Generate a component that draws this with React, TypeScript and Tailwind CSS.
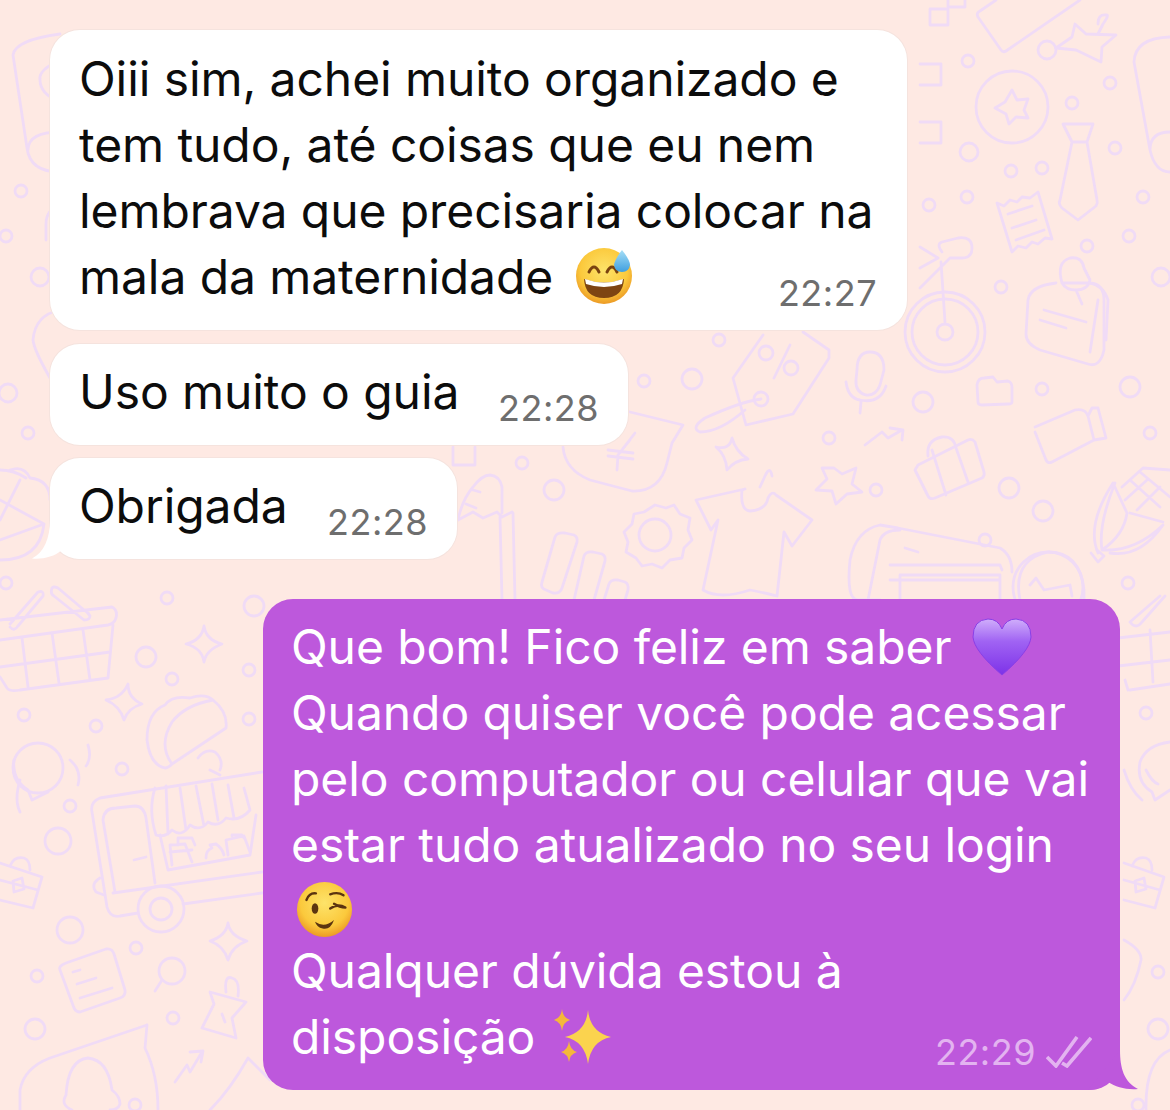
import React from "react";

// small dots scattered on the wallpaper: [cx, cy, r]
const dots: number[][] = [
  [1047, 50, 9], [968, 61, 6], [1110, 83, 6], [1072, 103, 6], [969, 152, 9], [1011, 171, 6], [1042, 168, 6],
  [1115, 148, 6], [967, 197, 6], [929, 205, 6], [1143, 197, 6], [1129, 236, 6], [1087, 246, 6], [1001, 287, 6],
  [1161, 277, 9], [122, 769, 6], [70, 806, 6], [58, 841, 13], [70, 930, 13], [136, 948, 6], [37, 976, 6],
  [173, 1018, 6], [35, 1029, 10], [167, 598, 6], [254, 606, 10], [146, 657, 10], [249, 670, 6], [172, 679, 6],
  [24, 715, 6], [96, 726, 6], [249, 719, 6], [6, 583, 6], [719, 340, 6], [644, 381, 6], [692, 379, 10],
  [829, 438, 6], [876, 490, 6], [923, 402, 10], [1042, 389, 6], [1130, 387, 10], [1150, 433, 6], [1009, 488, 10],
  [1043, 511, 10], [985, 540, 6], [1128, 583, 6], [21, 191, 6], [6, 236, 6], [40, 277, 9], [8, 393, 9], [28, 433, 6],
  [554, 490, 10], [522, 463, 6], [1146, 713, 6], [1158, 972, 6], [1158, 1029, 10], [1138, 1105, 6], [135, 1105, 6],
  [1012, 107, 36], [945, 332, 8], [655, 535, 16], [172, 971, 13], [161, 909, 11], [161, 909, 23], [945, 332, 33], [945, 332, 40],
  [1048, 587, 35], [38, 768, 25],
];

const doodles: string[] = [
  // phone and squares, top right
  "M1080 0L1006 51Q1003 53 1001 50L978 17Q976 13 980 11L996 0",
  "M930 9H948V25H930ZM948 0V7H965V0M920 64H941V85H920M920 122H941V143H920",
  // nipple bottle
  "M1075 24L1086 34L1116 35L1102 47L1101 62L1076 50L1056 48L1072 37Z M1098 34L1103 24Q1110 14 1106 15Q1098 14 1098 24",
  // big lens, right edge
  "M1170 37Q1135 38 1134 62L1150 150Q1155 172 1170 172M1170 132Q1150 132 1150 150",
  // tie
  "M1063 124H1093L1087 142H1072ZM1072 142L1060 200Q1058 204 1062 208L1078 220L1096 206Q1098 203 1097 200L1087 142",
  // receipt
  "M997 203L1004 206L1010 200L1017 202L1022 197L1030 198L1038 192L1052 239L1045 238L1038 244L1032 242L1026 248L1018 246L1012 252ZM1008 214L1032 206M1012 228L1036 220M1016 240L1044 230",
  // bike
  "M920 247L938 258L920 268M920 288L950 258L962 258Q972 258 972 248Q972 236 958 238L942 242Q936 244 942 252M945 322L941 262",
  // pinned note
  "M1056 283Q1030 286 1028 300L1026 334Q1026 344 1040 350L1088 364Q1100 368 1104 350L1104 300Q1104 284 1090 283L1062 283M1044 310L1086 322M1040 320L1066 328M1062 283Q1056 262 1070 258Q1082 256 1084 268L1090 280Q1088 290 1076 290Q1066 290 1062 283M1076 290L1082 304",
  "M1090 283Q1104 286 1108 300L1106 340M1098 300L1090 352",
  // pattern repeated on the left: large lens
  "M60 34Q15 40 13 55L27 148Q30 172 60 172M60 132Q28 132 28 150M60 60Q38 70 40 80Q40 94 60 102",
  "M60 204Q46 210 46 224V240M60 310Q35 315 33 340Q34 350 50 378",
  // basket
  "M0 620L112 607Q118 610 116 618Q114 624 108 625L0 640M10 627Q14 632 18 626L43 596Q44 590 38 592L10 624M52 588Q50 594 54 596L84 620Q90 620 90 616Q88 612 84 610L58 588Q54 586 52 588",
  "M113 625L108 678L20 690Q10 692 7 688L0 677M0 667L110 652M22 638L28 687M52 633L59 683M83 630L90 680",
  // taco and stars
  "M204 626Q206 640 222 644Q206 650 204 662Q202 648 186 644Q202 640 204 626Z",
  "M128 684Q128 698 142 704Q128 708 124 720Q120 706 106 700Q122 698 128 684Z",
  "M165 768Q150 765 147 740Q147 712 165 705Q172 695 190 698Q205 693 213 700Q228 712 226 728L172 764Q168 768 165 768M172 764Q158 745 172 722Q185 705 213 700",
  "M198 758Q205 748 215 752Q224 760 220 770M210 770L220 775",
  // chat and sound waves
  "M32 800L28 790Q12 780 14 760M32 800L48 792M70 760Q82 770 78 785M88 745Q92 758 86 766M20 780Q14 800 20 812",
  // truck
  "M262 772L100 798Q90 802 92 812L107 907Q110 918 120 916L138 913M183 904L262 893M113 893L262 872",
  "M115 892L103 820Q104 808 116 808L135 806Q144 806 146 818L155 883",
  "M155 788Q148 810 156 835Q165 838 172 830Q182 838 190 825Q200 832 208 822Q218 828 226 818Q240 822 250 810L244 788M166 786L168 834M180 788L186 830M196 786L204 826M212 784L218 820M228 785L234 818",
  "M160 835L168 870L250 855L256 815",
  "M172 865L170 845L185 844L192 862M178 845V838L192 838L195 845M170 852L192 850M206 858Q206 850 212 848L210 845L216 844Q222 848 224 855M228 855L226 840L244 836L250 852M232 836V835H242L244 838",
  "M134 860L146 857M100 878Q90 884 96 892L104 895",
  // briefcase
  "M0 863L42 877L33 908L0 900M10 866Q14 856 24 858Q30 860 30 870M0 880L38 890M13 881L22 878L24 889L14 892Z",
  // note
  "M60 970Q58 966 66 963L106 949Q112 948 114 954L125 990Q126 996 120 998L80 1012Q76 1012 74 1008ZM73 972L80 970M77 984L96 978M80 998L112 988",
  // magnifier, bottle, star, arrow
  "M162 980L155 991",
  "M228 923Q230 936 247 941Q232 946 228 960Q224 946 210 941Q226 936 228 923Z",
  "M210 992L214 1004L202 1028L236 1038L232 1018L246 1002ZM226 992Q224 975 232 978Q240 980 238 996M222 1014L225 1022",
  "M175 1082L187 1065L190 1072L202 1052M190 1052L203 1051L201 1062",
  // speech with headset
  "M147 1025L50 1058Q24 1068 20 1090V1110M147 1025L145 1048Q158 1075 158 1110",
  "M66 1095Q68 1060 88 1058Q108 1060 112 1090M112 1090Q120 1096 120 1104Q118 1110 110 1110M66 1095Q60 1105 72 1110",
  "M210 1110Q230 1090 248 1058Q258 1068 270 1080",
  // price tag
  "M763 335L733 378L746 425L793 414L829 358L829 350L803 332M790 345L774 378M759 353a7 7 0 1 0 14 0a7 7 0 1 0-14 0M784 368a7 7 0 1 0 14 0a7 7 0 1 0-14 0M754 399a7 7 0 1 0 14 0a7 7 0 1 0-14 0",
  "M761 399Q740 402 705 418Q690 428 700 432Q720 432 745 410",
  // moon shape with yen
  "M630 412L683 425L672 443L667 463Q660 492 632 491L590 480Q565 470 563 447",
  "M635 433L618 455M608 450L633 453M608 456L633 459M618 455L617 470M630 440L618 455",
  // mic
  "M857 370Q857 352 870 352Q884 352 884 370L880 385Q876 396 866 395Q855 392 856 380ZM846 382Q848 398 860 400Q880 404 886 386M861 402L860 413",
  // arrow and 5 star
  "M865 445L882 432L888 438L902 430M890 428L903 430L902 440",
  "M834 468L842 474L856 468L852 484L862 492L847 494L836 504L832 491L816 490L827 479L822 468Z",
  // four point star under the tag
  "M732 438Q730 450 716 447Q726 455 727 470Q735 460 748 459Q736 452 732 438Z",
  // shirt
  "M745 489L696 500L711 530L718 520L703 590Q720 600 750 590Q770 594 777 596L784 532L792 546L812 520L776 495Q772 490 768 498Q766 510 750 511Q740 510 742 490ZM760 487L765 476Q770 465 772 476",
  // gear
  "M655 505L666 508L674 505L680 514L690 518L688 530L692 540L684 548L682 558L670 560L662 568L652 564L642 566L636 558L626 552L628 542L624 532L632 524L634 514L644 512Z",
  // bread, square, bars
  "M458 520Q462 500 473 487Q482 475 490 475Q500 476 502 487V513M458 520L473 512L483 518L497 512L502 517L512 512M500 517L502 600M513 513L515 600M473 490L480 492M466 504L476 508",
  "M453 447V465H475V447",
  "M555 537Q557 532 565 533L574 535Q578 537 577 542L562 588Q560 594 553 593L546 590Q540 588 542 582Z",
  "M574 600L584 556Q586 551 593 552L602 554Q606 556 605 561L594 600M604 600L609 584Q611 579 618 580L625 582Q629 584 628 590L625 600",
  // pattern behind card
  "M880 600L858 600Q846 600 850 560Q856 530 880 525L898 528L1000 548Q1012 555 1012 572",
  "M868 600L880 540Q884 530 900 530M905 548L918 552",
  "M900 600V575H1000V600M890 565H1000L1002 570M890 580H1000",
  "M1020 600Q1012 560 1048 552Q1080 552 1084 590V600M1030 585L1036 578L1044 590L1070 585L1072 596",
  // folder, camera, suitcase
  "M978 402L977 385Q978 378 984 378L993 377L997 382L1008 381Q1012 382 1012 388L1012 402Q1012 404 1008 404L982 405Q978 405 978 402Z",
  "M1035 427L1075 410Q1085 408 1088 416L1094 440L1052 462Q1048 464 1046 460L1035 432M1088 416L1092 408L1098 408L1106 438L1094 440",
  "M918 465L968 440Q972 438 975 442L984 472Q985 476 982 478L935 498Q930 500 928 496L915 470ZM928 456Q926 440 942 437Q954 436 956 448M932 450L946 495M955 445L968 482",
  // corn (both sides)
  "M1098 553Q1086 525 1113 483L1127 513Q1124 535 1102 550Q1098 525 1115 483M1102 550Q1135 552 1163 525Q1140 558 1110 553M1130 513L1163 522M1122 487L1143 468L1170 470M1130 480L1160 507M1140 472L1170 497M1125 500L1147 480M1137 510L1160 487",
  "M1091 553L1098 562L1104 556L1097 550",
  "M0 560Q40 560 44 524L0 540M0 500L44 524M0 520L20 480M10 470Q24 465 30 478Q50 480 50 500M0 470Q14 470 26 478",
  // right edge, basket and bubbles
  "M1118 638L1170 632M1118 666L1170 660M1150 630L1153 682M1130 690L1170 684M1125 680L1128 690M1130 622L1160 596M1130 622Q1136 630 1142 622L1165 596",
  "M1155 800L1152 792Q1136 782 1140 762Q1146 745 1170 742M1155 800L1170 790M1146 770Q1152 782 1158 784M1124 770Q1130 790 1142 800",
  "M1124 863L1164 877L1155 908L1124 900M1132 866Q1136 856 1146 858Q1152 860 1152 870M1124 880L1160 890M1135 881L1144 878L1146 889L1136 892Z",
  "M1124 940Q1142 950 1141 960Q1136 985 1124 1000M1170 1050Q1145 1060 1146 1110",
];

const Tail = ({ fill, className, d }: { fill: string; className: string; d: string }) => (
  <svg viewBox="0 0 50 40" className={className} aria-hidden="true">
    <path d={d} fill={fill} />
  </svg>
);

const SweatSmile = () => (
  <svg viewBox="0 0 60 60" className="inline-block ml-[8px] w-[60px] h-[60px] align-[-11px]" aria-hidden="true">
    <defs>
      <radialGradient id="faceA" cx="50%" cy="40%" r="60%">
        <stop offset="0%" stopColor="#fde36a" />
        <stop offset="70%" stopColor="#fbc93c" />
        <stop offset="100%" stopColor="#ec9a25" />
      </radialGradient>
      <linearGradient id="dropA" x1="0" y1="0" x2="0" y2="1">
        <stop offset="0%" stopColor="#a5def6" />
        <stop offset="100%" stopColor="#3f9fe0" />
      </linearGradient>
    </defs>
    <circle cx="29" cy="31" r="28" fill="url(#faceA)" />
    <path d="M14 27Q19 17 24 27M32 27Q37 17 42 27" fill="none" stroke="#7a4310" strokeWidth="3" strokeLinecap="round" />
    <path d="M9 34Q29 41 49 34Q48 53 29 53Q10 53 9 34Z" fill="#7d4412" />
    <path d="M10 34Q29 41 48 34L47 39Q29 45 11 39Z" fill="#fff" />
    <path d="M47 5Q55 15 55 20Q54 27 47 27Q40 27 39 20Q40 14 47 5Z" fill="url(#dropA)" />
  </svg>
);

const PurpleHeart = () => (
  <svg viewBox="0 0 60 60" className="inline-block ml-[7px] w-[60px] h-[60px] align-[-13px]" aria-hidden="true">
    <defs>
      <linearGradient id="heartA" x1="0" y1="0" x2="0" y2="1">
        <stop offset="0%" stopColor="#d0aefb" />
        <stop offset="40%" stopColor="#a063f3" />
        <stop offset="100%" stopColor="#7d32e8" />
      </linearGradient>
    </defs>
    <path d="M30 58Q2 34 1 20Q1 3 16 2Q26 2 30 12Q34 2 44 2Q59 3 59 20Q58 34 30 58Z" fill="url(#heartA)" stroke="#8a3fe6" strokeWidth="1" />
  </svg>
);

const Wink = () => (
  <svg viewBox="0 0 60 60" className="block ml-[5px] mt-[3px] w-[57px] h-[57px]" aria-hidden="true">
    <defs>
      <radialGradient id="faceB" cx="50%" cy="38%" r="62%">
        <stop offset="0%" stopColor="#fde36a" />
        <stop offset="70%" stopColor="#fbc93c" />
        <stop offset="100%" stopColor="#ec9a25" />
      </radialGradient>
    </defs>
    <circle cx="30" cy="30" r="29" fill="url(#faceB)" />
    <ellipse cx="20" cy="29" rx="3.5" ry="5.5" fill="#5b3410" />
    <path d="M11 20Q14 12 21 13M36 14Q44 11 50 15M36 29Q44 23 52 28M40 24Q46 28 52 28" fill="none" stroke="#5b3410" strokeWidth="2.5" strokeLinecap="round" />
    <path d="M20 43Q30 50 40 41Q36 52 28 50Q22 49 20 43Z" fill="#5b3410" />
  </svg>
);

const Sparkles = () => (
  <svg viewBox="0 0 60 60" className="inline-block ml-[4px] w-[60px] h-[60px] align-[-13px]" aria-hidden="true">
    <path d="M35 3Q37 25 58 30Q38 34 35 57Q32 34 12 30Q33 25 35 3Z" fill="#fbd34e" />
    <path d="M9 2Q10 11 17 13Q10 15 9 24Q8 15 1 13Q8 11 9 2Z" fill="#f5b83a" />
    <path d="M16 34Q17 43 24 45Q17 47 16 55Q15 47 8 45Q15 43 16 34Z" fill="#f5b83a" />
  </svg>
);

const DoubleCheck = () => (
  <svg viewBox="0 0 46 32" className="w-[46px] h-[32px]" fill="none" stroke="#e3b3f0" strokeWidth="3.6" aria-hidden="true">
    <path d="M1 21L10 30L31 1" />
    <path d="M16 27L21 30L45 2" />
  </svg>
);

export default function App() {
  return (
    <div className="relative w-[1170px] h-[1110px] overflow-hidden bg-[#fee9e3] font-['Inter','Liberation_Sans',sans-serif]">
      <svg viewBox="0 0 1170 1110" className="absolute inset-0 w-[1170px] h-[1110px]" fill="none" stroke="#f0dbf6" strokeWidth="2.8" strokeLinecap="round" strokeLinejoin="round" aria-hidden="true">
        {dots.map((c, i) => (
          <circle key={i} cx={c[0]} cy={c[1]} r={c[2]} />
        ))}
        <path d="M1012 90L1017 100L1028 99L1024 110L1028 118L1016 117L1009 124L1006 114L995 108L1005 102Z" />
        {doodles.map((d, i) => (
          <path key={i} d={d} />
        ))}
      </svg>

      <div className="relative flex flex-col items-start pt-[30px] pl-[50px] pr-[50px] text-[48px] leading-[66px] tracking-[-0.08px] text-[#0c0c0c]">
        <div className="w-[857px] h-[300px] bg-white rounded-[30px] shadow-[0_0_0_1px_#f5e3de] pt-[16px] pl-[29px] pr-[30px]">
          Oiii sim, achei muito organizado e
          <br />
          tem tudo, até coisas que eu nem
          <br />
          lembrava que precisaria colocar na
          <div className="flex justify-between">
            <span>
              mala da maternidade <SweatSmile />
            </span>
            <span className="self-end mb-[-5px] text-[36px] leading-[44px] tracking-[0.5px] text-[#6e6e6e]">22:27</span>
          </div>
        </div>

        <div className="flex justify-between mt-[14px] w-[578px] h-[101px] bg-white rounded-[30px] shadow-[0_0_0_1px_#f5e3de] pt-[15px] pl-[29px] pr-[29px]">
          <span>Uso muito o guia</span>
          <span className="self-end mb-[15px] text-[36px] leading-[44px] tracking-[0.5px] text-[#6e6e6e]">22:28</span>
        </div>

        <div className="relative flex justify-between mt-[13px] w-[407px] h-[101px] bg-white rounded-[30px] shadow-[0_0_0_1px_#f5e3de] pt-[15px] pl-[29px] pr-[29px]">
          <span>Obrigada</span>
          <span className="self-end mb-[15px] text-[36px] leading-[44px] tracking-[0.5px] text-[#6e6e6e]">22:28</span>
          <Tail fill="#ffffff" className="absolute left-[-18px] bottom-0 w-[50px] h-[40px]" d="M18 0C18 20 12 33 0 39.5C10 40.5 22 38 30 31C36 37 44 40 50 40Z" />
        </div>

        <div className="relative self-end mt-[40px] w-[857px] h-[491px] bg-[#bd58dc] rounded-[30px] pt-[15px] pl-[28px] pr-[28px] text-white">
          Que bom! Fico feliz em saber <PurpleHeart />
          <br />
          Quando quiser você pode acessar
          <br />
          pelo computador ou celular que vai
          <br />
          estar tudo atualizado no seu login
          <div className="h-[57px]">
            <Wink />
          </div>
          Qualquer dúvida estou à
          <div className="flex justify-between">
            <span>
              disposição <Sparkles />
            </span>
            <span className="flex items-center gap-[10px] self-end mb-[-4px] text-[36px] leading-[44px] tracking-[0.5px] text-[#e3b3f0]">
              22:29
              <DoubleCheck />
            </span>
          </div>
          <Tail fill="#bd58dc" className="absolute right-[-18px] bottom-0 w-[50px] h-[40px]" d="M32 0C32 18 36 32 50 39C38 40 28 37 20 32C15 37 8 40 0 40Z" />
        </div>
      </div>
    </div>
  );
}
